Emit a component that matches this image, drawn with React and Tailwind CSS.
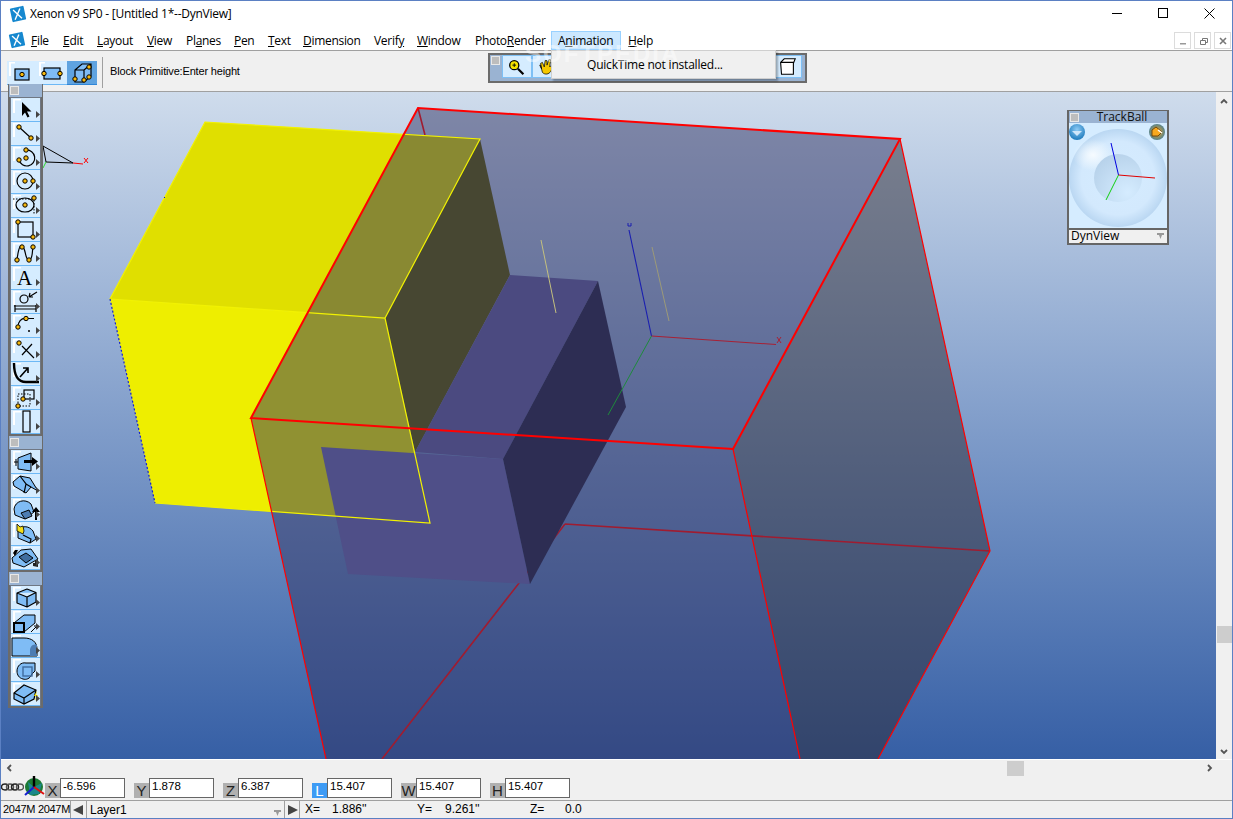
import React from 'react';

const menus = [
  ['', 'F', 'ile', 'w-[32px]'],
  ['', 'E', 'dit', 'w-[34px]'],
  ['', 'L', 'ayout', 'w-[50px]'],
  ['', 'V', 'iew', 'w-[39px]'],
  ['Pl', 'a', 'nes', 'w-[48px]'],
  ['', 'P', 'en', 'w-[34px]'],
  ['', 'T', 'ext', 'w-[35px]'],
  ['', 'D', 'imension', 'w-[71px]'],
  ['Verif', 'y', '', 'w-[43px]'],
  ['', 'W', 'indow', 'w-[58px]'],
  ['Photo', 'R', 'ender', 'w-[76px]'],
];

const Dot = ({ x, y }) => <circle cx={x} cy={y} r="2.2" fill="#f6b80c" stroke="#000" strokeWidth="1" />;

// white corner highlight + dropdown marker every palette button has
const Btn = ({ children, arrow = true }) => (
  <div className="h-[24px] w-[29px] bg-[#d5ecff] border-b border-[#6db8f5]">
    <svg width="29" height="23" viewBox="0 0 29 23" className="block">
      <path d="M2 1h8v1.500H4V15H2z" fill="#fff" />
      {children}
      {arrow && <path d="M25 13l4 3.500-4 3.500z" fill="#444" />}
    </svg>
  </div>
);

const Blue = '#7fbcf5';
const stroke = { fill: 'none', stroke: '#000', strokeWidth: 1.2 };

const drawIcons = [
  <path d="M11 4v14l3-3.500 2.500 5 2-1-2.500-5h4.500z" fill="#000" />,
  <g><path d="M8 5L20 16" {...stroke} /><Dot x={8} y={5} /><Dot x={20} y={16} /></g>,
  <g><path d="M15 4a8 8 0 1 1-7 10" {...stroke} /><Dot x={15} y={4} /><Dot x={8} y={14} /><Dot x={15} y={12} /></g>,
  <g><circle cx="14" cy="11" r="8" {...stroke} /><Dot x={14} y={11} /><Dot x={22} y={11} /></g>,
  <g><path d="M2 5h20M23 6v14" fill="none" stroke="#000" strokeDasharray="1.5 1.5" /><ellipse cx="14" cy="11" rx="9" ry="7" {...stroke} /><Dot x={14} y={11} /><Dot x={23} y={4} /></g>,
  <g><rect x="7" y="4" width="15" height="15" {...stroke} /><Dot x={7} y={4} /><Dot x={22} y={19} /></g>,
  <g><path d="M6 18C8 2 10 3 12 5c3 3 2 13 6 13s3-9 4-13" {...stroke} /><Dot x={6} y={18} /><Dot x={11} y={5} /><Dot x={18} y={18} /><Dot x={22} y={5} /></g>,
  <text x="13.500" y="19" textAnchor="middle" fontFamily="Liberation Serif" fontSize="21" fill="#000">A</text>,
  <g><circle cx="13" cy="9" r="4" {...stroke} /><path d="M26 2l-8 5m0 0l4 0m-4 0l1-4" {...stroke} /><path d="M3 16h23M4 19h21M4 15v7M25 15v7" {...stroke} /></g>,
  <g><path d="M7 13C7 8 10 4 15 4.500h8" {...stroke} /><Dot x={7} y={13} /><Dot x={15} y={4.5} /><path d="M17 17h2M18 16v2" stroke="#000" /></g>,
  <g><path d="M11 8l12 12M21 6L11 17" {...stroke} /><Dot x={8} y={5} /></g>,
  <g><path d="M3 1c0 13 4 19 12 19h13" fill="none" stroke="#000" strokeWidth="2.4" /><path d="M9 15l8-9m-5 0h5v5" fill="none" stroke="#000" strokeWidth="1.6" /></g>,
  <g><rect x="13" y="4" width="10" height="9" {...stroke} /><rect x="7" y="8" width="12" height="12" fill="none" stroke="#000" strokeDasharray="1.5 1.5" /><Dot x={12} y={13} /><Dot x={7} y={20} /></g>,
  <rect x="12" y="1" width="7" height="21" {...stroke} />,
];

const surfaceIcons = [
  <g><path d="M7 8l13-5v18l-13-2z" fill={Blue} stroke="#000" /><path d="M3 12h4M5 9v7" stroke="#000" /><path d="M13 10h8V7l6 4.500-6 4.500v-3h-8z" fill="#000" /></g>,
  <g><path d="M2 8l7-6 10 2 8 13-7-4-5 6-12-7z" fill={Blue} stroke="#000" /><path d="M9 2l6 8-2 9M15 10l5 3" {...stroke} /></g>,
  <g><path d="M3 11c1-8 11-11 17-5l3 8-9 7-10-4z" fill={Blue} stroke="#000" /><path d="M10 15l8-3 3 6-7 3z" fill="#4d7db3" stroke="#000" /><path d="M24 22v-8h-3l4-5 4 5h-3v8z" fill="#000" /></g>,
  <g><path d="M7 8c5-5 11-4 15 1l3 8-6 4-12-5z" fill={Blue} stroke="#000" /><path d="M6 2l3 3 3-1 1 5-1 3-6-3z" fill="#f5df1a" stroke="#000" strokeWidth="0.8" /><path d="M12 13l8 4-1 4" {...stroke} /></g>,
  <g><path d="M1 12l9-8 10-1 7 10-14 8-11-4z" fill={Blue} stroke="#000" /><path d="M8 11l7-4 7 5-7 5z" fill="#3f6c9e" stroke="#000" /><path d="M2 7l2-3 3 0-3 6" fill="#000" /><path d="M22 20v-3h2v-3h3v7z" fill="#222" /></g>,
];

const solidIcons = [
  <path d="M16 3l9 3.500V16l-9 5-10-4V7zM6 7l10 4 9-4.500M16 11v10" fill={Blue} stroke="#000" strokeWidth="1.2" strokeLinejoin="round" />,
  <g><path d="M3 13l10-8h11v8l-11 9z" fill={Blue} stroke="#000" /><rect x="3" y="13" width="10" height="9" fill={Blue} stroke="#000" strokeWidth="2" /><path d="M20 22l6-6m-3 0h3v3" fill="none" stroke="#000" /></g>,
  <g><path d="M1 4h12c8 0 13 4 13 11v7H1z" fill={Blue} stroke="#000" strokeWidth="1" /><path d="M19 22v-6c0-3 3-7 7-5v11z" fill="#4d7db3" /></g>,
  <g><path d="M6 13c0-5 4-9 9-8h9v8l-3 3c-2 5-6 6-9 5-4-1-6-4-6-8z" fill={Blue} stroke="#000" /><rect x="12" y="9" width="9" height="9" fill="none" stroke="#3f6c9e" strokeWidth="1.4" /></g>,
  <g><path d="M3 11l10-8 12 5-2 9-10 5-10-5z" fill={Blue} stroke="#000" strokeWidth="1.2" /><path d="M3 11l10 5 12-8M13 16v6" {...stroke} /><path d="M26 9l-3 5 2 0-1 5 3-6h-2z" fill="#f5e400" /></g>,
];

const Palette = ({ icons }) => (
  <div className="w-[35px] bg-[#6f7783] border-x-2 border-b-2 border-[#6b6b6b]">
    <div className="h-[13px] bg-[#9ab3d2] flex items-center -mx-[1px] px-[1px]">
      <div className="h-[9px] w-[9px] bg-[#bdbdbd] border border-[#e8e8e8]" />
    </div>
    <div className="flex flex-col pl-[1px] pt-[1px]">
      {icons.map((ic, i) => <Btn key={i}>{ic}</Btn>)}
    </div>
  </div>
);

const Coord = ({ label, value, active }) => (
  <div className="flex items-end w-[89px]">
    <div className={`w-[15px] h-[15px] mb-[1px] flex items-center justify-center text-[15px] leading-none ${active ? 'bg-[#3d9bf5] text-white' : 'bg-[#b0b0b0] text-[#222]'}`}>{label}</div>
    <div className="w-[65px] h-[20px] bg-white border border-[#666] mb-[1px] pl-[2px] text-[11.5px] leading-[15px] text-black">{value}</div>
  </div>
);

const XIcon = () => (
  <svg width="18" height="18" viewBox="0 0 18 18">
    <g transform="rotate(-12 9 9)">
      <rect x="2" y="2" width="14" height="14" rx="1" fill="#1688cf" />
      <path d="M5 4l7 10M12 4l-7 10" stroke="#fff" strokeWidth="1.4" />
    </g>
  </svg>
);

function Scene() {
  return (
    <svg className="absolute inset-0" width="1215" height="667" viewBox="1 92 1215 667">
      {/* yellow block, sits behind the translucent box */}
      <polygon points="205,122 480,139 385,318 110,299" fill="#e0df00" />
      <polygon points="110,299 385,318 430,523 155,503" fill="#eeee00" />
      <polygon points="480,139 385,318 415,452 510,275" fill="#5c5a00" />

      {/* translucent box faces */}
      <polygon points="418,108 900,139 733,449 251,418" fill="#323464" fillOpacity="0.5" />
      <polygon points="251,418 733,449 800,759 326,759" fill="#323464" fillOpacity="0.5" />
      <polygon points="900,139 990,551 878,759 800,759 733,449" fill="#2e2a34" fillOpacity="0.5" />

      <path d="M565 524L990 551M565 524L382 759M418 108L425 135" stroke="#a01c30" strokeWidth="1.6" fill="none" />

      {/* purple block */}
      <polygon points="415,452 510,275 598,281 503,459" fill="#4b4a80" />
      <polygon points="321,447 503,459 530,584 348,574" fill="#4f4f88" />
      <polygon points="598,281 626,407 530,584 503,459" fill="#2d2d53" />

      <path d="M541 240L556 313" stroke="#c4c07e" />
      <path d="M652 247L669 321" stroke="#9c9a78" />

      <path d="M205 122L480 139L385 318L110 299ZM385 318L430 523L155 503" fill="none" stroke="#f2f200" strokeWidth="1.2" />
      <path d="M110 299L155 503" stroke="#1420d0" strokeWidth="1.2" strokeDasharray="2 2" />
      <rect x="164" y="197" width="1" height="1" fill="#1420d0" />

      {/* axes */}
      <path d="M651.500 336L629 230" stroke="#1a1fb0" strokeWidth="1.1" />
      <path d="M651.500 336L776 344.500" stroke="#a82034" strokeWidth="1.1" />
      <path d="M651.500 336L608 415" stroke="#1e8a3c" strokeWidth="1" />
      <path d="M628 223v3h3v-3" stroke="#1a1fb0" fill="none" />
      <path d="M777 337l4 6m0-6l-4 6" stroke="#a82034" fill="none" />

      {/* red box edges */}
      <path d="M251 418L418 108L900 139L733 449Z" fill="none" stroke="#f00" strokeWidth="2" />
      <path d="M900 139L990 551L878 759M733 449L800 759M251 418L326 759" fill="none" stroke="#f00" strokeWidth="1.2" />

      {/* corner triad */}
      <path d="M43 146L73 163L46 162Z" fill="none" stroke="#000" />
      <path d="M73 163L83 164" stroke="#f00" />
      <path d="M46 162L43 168" stroke="#2ee02e" />
      <path d="M84 158l4 5m0-5l-4 5" stroke="#f00" fill="none" />
    </svg>
  );
}

function TrackBall() {
  return (
    <div className="absolute left-[1066px] top-[109px] w-[102px] h-[135px] bg-[#d5ecff] border-2 border-t border-[#666] flex flex-col">
      <div className="h-[12px] bg-[#9ab3d2] flex items-center relative">
        <div className="h-[9px] w-[9px] ml-[1px] bg-[#bdbdbd] border border-[#e8e8e8]" />
        <span className="flex-1 text-center text-[12px] leading-[14px] text-[#111] -ml-[2px]">TrackBall</span>
      </div>
      <svg width="98" height="105" viewBox="1069 123 98 105" className="block">
        <defs>
          <radialGradient id="ball" cx="0.5" cy="0.5" r="0.5">
            <stop offset="0" stopColor="#d5ecff" />
            <stop offset="0.75" stopColor="#d3e9fd" />
            <stop offset="1" stopColor="#bad7f2" />
          </radialGradient>
          <radialGradient id="shine" cx="0.5" cy="0.5" r="0.5">
            <stop offset="0" stopColor="#f6fbff" />
            <stop offset="1" stopColor="#f6fbff" stopOpacity="0" />
          </radialGradient>
          <radialGradient id="dimple" cx="0.7" cy="0.8" r="0.95">
            <stop offset="0" stopColor="#d5ecff" />
            <stop offset="1" stopColor="#b4cfe8" />
          </radialGradient>
          <radialGradient id="bluebtn" cx="0.5" cy="0.35" r="0.7">
            <stop offset="0" stopColor="#8ecbf5" />
            <stop offset="1" stopColor="#1574b8" />
          </radialGradient>
          <radialGradient id="orangebtn" cx="0.5" cy="0.5" r="0.7">
            <stop offset="0" stopColor="#f8a81e" />
            <stop offset="1" stopColor="#1574b8" />
          </radialGradient>
        </defs>
        <circle cx="1118" cy="178" r="49" fill="url(#ball)" />
        <ellipse cx="1093" cy="155" rx="20" ry="16" fill="url(#shine)" />
        <circle cx="1118" cy="178" r="24" fill="url(#dimple)" />
        <path d="M1118.500 175L1111 143" stroke="#0000e0" strokeWidth="1" />
        <path d="M1118.500 175L1155 178" stroke="#e00000" strokeWidth="1" />
        <path d="M1118.500 175L1106 200" stroke="#10d010" strokeWidth="1" />
        <circle cx="1077" cy="132" r="8" fill="url(#bluebtn)" />
        <path d="M1072 131h10l-5 5z" fill="#cfe6fa" />
        <circle cx="1157" cy="132" r="8" fill="url(#orangebtn)" />
        <path d="M1152 130l4-3 6 5-4 4h-6z" fill="#f8a81e" stroke="#5a3400" strokeWidth="0.8" />
        <path d="M1158 130l4 3" stroke="#fff" strokeWidth="1.4" />
      </svg>
      <div className="h-[15px] bg-[#f0f0f0] border-t-2 border-[#666] flex items-center justify-between pl-[2px] pr-[3px] pb-[1px] text-[12px] leading-none text-black">
        <span>DynView</span>
        <svg width="7" height="6" viewBox="0 0 7 6"><path d="M0 0h7v2H5l-1.500 4L2 2H0z" fill="#999" /></svg>
      </div>
    </div>
  );
}

export default function App() {
  return (
    <div className="relative w-[1233px] h-[819px] overflow-hidden border border-[#5b80c3] bg-white flex flex-col font-['Open_Sans',sans-serif] text-[12px] text-black">
      {/* title bar */}
      <div className="h-[24px] shrink-0 flex items-center">
        <div className="ml-[8px] mr-[3px] mt-[2px]"><XIcon /></div>
        <span className="mt-[1px] tracking-[-0.25px]">Xenon v9 SP0 - [Untitled 1*--DynView]</span>
        <div className="ml-auto flex items-center text-black">
          <div className="w-[46px] flex justify-center"><div className="w-[10px] h-[1px] bg-black" /></div>
          <div className="w-[46px] flex justify-center"><div className="w-[10px] h-[10px] border border-black" /></div>
          <div className="w-[46px] flex justify-center">
            <svg width="11" height="11" viewBox="0 0 11 11"><path d="M.5.500l10 10m0-10l-10 10" stroke="#000" fill="none" /></svg>
          </div>
        </div>
      </div>

      {/* menu bar */}
      <div className="h-[25px] shrink-0 flex items-end relative">
        <div className="ml-[7px] mr-[5px] mb-[1px] h-[18px]"><XIcon /></div>
        {menus.map(([a, u, b, w]) => (
          <div key={a + u + b} className={`${w} h-[18px] leading-[18px] tracking-[-0.3px] whitespace-nowrap`}>{a}<span className="underline">{u}</span>{b}</div>
        ))}
        <div className="w-[70px] h-[19px] bg-[#cce8ff] border border-[#99d1ff] pl-[6px] leading-[17px] tracking-[-0.25px]">A<span className="underline">n</span>imation</div>
        <div className="ml-[7px] h-[18px] leading-[18px] tracking-[-0.25px]"><span className="underline">H</span>elp</div>
        <div className="ml-auto mr-[1px] mb-[1px] flex gap-[3px]">
          {[
            <path d="M3 8h6v1.500H3z" fill="#999" />,
            <path d="M3.500 5.500h5v4h-5zM5.500 5.500v-2h5v4h-2" fill="none" stroke="#777" />,
            <path d="M3 3l6 6m0-6l-6 6" stroke="#777" strokeWidth="1.6" />,
          ].map((p, i) => (
            <div key={i} className="w-[17px] h-[17px] bg-white border border-[#dcdcdc] flex items-center justify-center">
              <svg width="12" height="12" viewBox="0 0 12 12">{p}</svg>
            </div>
          ))}
        </div>
      </div>

      {/* tool options row */}
      <div className="h-[42px] shrink-0 bg-[#f0f0f0] border-y border-[#a0a0a0] flex items-center">
        <div className="flex ml-[6px] mt-[4px]">
          <div className="w-[30px] h-[24px] bg-[#d5ecff] border-b border-[#6db8f5]">
            <svg width="30" height="23" viewBox="0 0 30 23" className="block"><path d="M2 1h6v1.500H4V15H2z" fill="#fff" /><rect x="8" y="8" width="14" height="11" fill={Blue} stroke="#000" strokeWidth="1.2" /><Dot x={15} y={13.5} /></svg>
          </div>
          <div className="w-[30px] h-[24px] bg-[#d5ecff] border-b border-[#6db8f5]">
            <svg width="30" height="23" viewBox="0 0 30 23" className="block"><path d="M2 1h6v1.500H4V15H2z" fill="#fff" /><rect x="7" y="7" width="16" height="11" fill={Blue} stroke="#000" strokeWidth="1.2" /><Dot x={7} y={12.5} /><Dot x={23} y={12.5} /></svg>
          </div>
          <div className="w-[30px] h-[24px] bg-[#5fa3e0] border-b border-[#2f86d8]">
            <svg width="30" height="23" viewBox="0 0 30 23" className="block"><path d="M8 9l7-6h9v12l-7 6H8zM8 9h9v12M17 9l7-6" fill={Blue} stroke="#000" strokeWidth="1.2" /><Dot x={8} y={18} /><Dot x={17} y={19} /><Dot x={22} y={6} /><Dot x={22} y={16} /></svg>
          </div>
        </div>
        <div className="w-[1px] h-[31px] bg-[#a0a0a0] ml-[5px] mr-[7px] mt-[2px]" />
        <span className="mt-[1px] font-['Liberation_Sans',sans-serif] text-[11px] tracking-[-0.17px]">Block Primitive:Enter height</span>
      </div>

      {/* viewport + vertical scrollbar */}
      <div className="h-[667px] shrink-0 flex">
        <div className="relative w-[1215px] overflow-hidden bg-linear-to-b from-[#cfdcec] to-[#365fa5]">
          <Scene />
        </div>
        <div className="w-[16px] bg-[#f0f0f0] flex flex-col items-center">
          <svg width="8" height="6" viewBox="0 0 8 6" className="mt-[6px]"><path d="M1 5l3-3 3 3" stroke="#555" strokeWidth="1.8" fill="none" /></svg>
          <div className="w-[15px] h-[17px] bg-[#cdcdcd] mt-[522px]" />
          <svg width="8" height="6" viewBox="0 0 8 6" className="mt-[106px]"><path d="M1 1l3 3 3-3" stroke="#555" strokeWidth="1.8" fill="none" /></svg>
        </div>
      </div>

      {/* horizontal scrollbar */}
      <div className="h-[17px] shrink-0 bg-[#f0f0f0] border-t border-white flex items-center">
        <svg width="6" height="8" viewBox="0 0 6 8" className="ml-[5px]"><path d="M5 1L2 4l3 3" stroke="#555" strokeWidth="1.8" fill="none" /></svg>
        <div className="w-[17px] h-[15px] bg-[#cdcdcd] ml-[995px]" />
        <svg width="6" height="8" viewBox="0 0 6 8" className="ml-[183px]"><path d="M1 1l3 3-3 3" stroke="#555" strokeWidth="1.8" fill="none" /></svg>
      </div>

      {/* coordinate inputs */}
      <div className="h-[24px] shrink-0 bg-[#f0f0f0] flex items-end font-['Liberation_Sans',sans-serif] pb-[1px]">
        <svg width="23" height="12" viewBox="0 0 23 12" className="mb-[6px] shrink-0">
          <ellipse cx="4" cy="6" rx="3.500" ry="3" fill="none" stroke="#222" strokeWidth="1.5" />
          <ellipse cx="9" cy="6" rx="3.500" ry="3" fill="none" stroke="#555" strokeWidth="1.5" />
          <ellipse cx="14" cy="6" rx="3.500" ry="3" fill="none" stroke="#222" strokeWidth="1.5" />
          <ellipse cx="19" cy="6" rx="3.500" ry="3" fill="none" stroke="#555" strokeWidth="1.5" />
        </svg>
        <svg width="21" height="21" viewBox="0 0 21 21" className="mb-[2px] shrink-0">
          <circle cx="10" cy="11" r="9" fill="#1c7a34" />
          <path d="M4 6l6 5 8-4-3 11-9 1z" fill="#1a8fb0" opacity="0.7" />
          <path d="M10 0v11" stroke="#000" strokeWidth="2.4" />
          <path d="M10 11L1 19" stroke="#1420d0" strokeWidth="2" />
          <path d="M10 11l10 7" stroke="#e01010" strokeWidth="2" />
        </svg>
        <Coord label="X" value="-6.596" />
        <Coord label="Y" value="1.878" />
        <Coord label="Z" value="6.387" />
        <Coord label="L" value="15.407" active />
        <Coord label="W" value="15.407" />
        <Coord label="H" value="15.407" />
      </div>

      {/* status bar */}
      <div className="h-[18px] shrink-0 bg-[#f0f0f0] flex font-['Liberation_Sans',sans-serif] text-[12px] leading-[16px] text-black border-t border-[#a0a0a0]">
        <div className="w-[69px] ml-[1px] whitespace-nowrap border-r border-[#a0a0a0] pl-[1px] text-[11px] tracking-[-0.3px]">2047M 2047M</div>
        <div className="w-[16px] flex items-center justify-center border-r border-[#a0a0a0]">
          <svg width="11" height="10" viewBox="0 0 11 10"><path d="M0 5l10-5v10z" fill="#444" /></svg>
        </div>
        <div className="w-[198px] flex items-center justify-between pl-[3px] pr-[3px] border-r border-[#a0a0a0]">
          <span>Layer1</span>
          <svg width="7" height="6" viewBox="0 0 7 6" className="mt-[6px]"><path d="M0 0h7v2H5l-1.500 4L2 2H0z" fill="#999" /></svg>
        </div>
        <div className="w-[15px] flex items-center justify-center border-r border-[#a0a0a0]">
          <svg width="11" height="10" viewBox="0 0 11 10"><path d="M11 5L1 0v10z" fill="#444" /></svg>
        </div>
        <div className="flex-1 flex pl-[5px] whitespace-pre">
          <span className="w-[27px]">X=</span>
          <span className="w-[85px]">1.886''</span>
          <span className="w-[28px]">Y=</span>
          <span className="w-[85px]">9.261''</span>
          <span className="w-[35px]">Z=</span>
          <span>0.0</span>
        </div>
      </div>

      {/* floating palettes */}
      <div className="absolute left-[7px] top-[83px] flex flex-col">
        <Palette icons={drawIcons} />
        <Palette icons={surfaceIcons} />
        <Palette icons={solidIcons} />
      </div>

      <TrackBall />

      {/* view toolbar, mostly hidden by the open menu */}
      <div className="absolute left-[487px] top-[52px] w-[319px] h-[30px] bg-[#9ab3d2] border-2 border-[#6b6b6b] flex">
        <div className="h-[9px] w-[9px] mt-[1px] ml-[1px] mr-[2px] bg-[#bdbdbd] border border-[#e8e8e8]" />
        <div className="flex">
          {[
            <g><circle cx="12" cy="10" r="5" fill="#f5e200" stroke="#000" strokeWidth="1.4" /><path d="M12 8v4M10 10h4" stroke="#000" /><path d="M16 14l6 6" stroke="#000" strokeWidth="2.4" /></g>,
            <path d="M8 10l2 8c3 3 7 2 9-1l4-7-2-1-3 3 1-8-2 0-2 6V5h-2l-1 7-2-5-2 1 1 6-2-4z" fill="#f5c800" stroke="#000" strokeWidth="0.8" />,
          ].map((ic, i) => (
            <div key={i} className="w-[30px] h-[23px] bg-[#d5ecff] border border-[#7ec0f5]">
              <svg width="28" height="21" viewBox="0 0 30 23" className="block">{ic}</svg>
            </div>
          ))}
          {[0, 1, 2, 3, 4, 5, 6].map(i => (
            <div key={i} className="w-[30px] h-[23px] bg-[#d5ecff] border border-[#7ec0f5]" />
          ))}
          <div className="w-[30px] h-[23px] bg-[#d5ecff] border border-[#7ec0f5]">
            <svg width="28" height="21" viewBox="0 0 30 23" className="block"><path d="M8 7l4-4h12l-2 5v12H9zM8 7h14M22 8v12" fill="#fff" stroke="#000" strokeWidth="1.2" /></svg>
          </div>
        </div>
      </div>

      {/* open Animation menu */}
      <div className="absolute left-[550px] top-[49px] w-[225px] h-[29px] bg-[#f0f0f0] border border-[#cfcfcf] shadow-[2px_2px_2px_rgba(0,0,0,0.3)] pl-[35px] leading-[27px] tracking-[-0.2px]">
        QuickTime not installed...
      </div>

      {/* watermark */}
      <div className="absolute left-[524px] top-[38px] text-[24px] leading-[30px] font-bold tracking-[2px] text-white/45 font-['Liberation_Sans',sans-serif] pointer-events-none">SOFTPEDIA</div>
    </div>
  );
}
